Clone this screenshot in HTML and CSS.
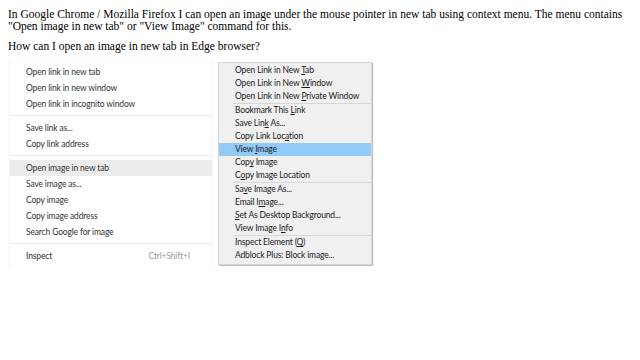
FILE: index.html
```html
<!DOCTYPE html>
<html>
<head>
<meta charset="utf-8">
<link rel="stylesheet" href="styles.css">
</head>
<body>
<p class="q">In Google Chrome / Mozilla Firefox I can open an image under the mouse pointer in new tab using context menu. The menu contains "Open image in new tab" or "View Image" command for this.</p>
<p class="q">How can I open an image in new tab in Edge browser?</p>
<div class="shot">
  <div class="chrome">
    <div class="ci">Open link in new tab</div>
    <div class="ci">Open link in new window</div>
    <div class="ci">Open link in incognito window</div>
    <div class="csep"></div>
    <div class="ci">Save link as...</div>
    <div class="ci">Copy link address</div>
    <div class="csep"></div>
    <div class="ci hl">Open image in new tab</div>
    <div class="ci">Save image as...</div>
    <div class="ci">Copy image</div>
    <div class="ci">Copy image address</div>
    <div class="ci">Search Google for image</div>
    <div class="csep"></div>
    <div class="ci"><span>Inspect</span><span class="key">Ctrl+Shift+I</span></div>
  </div>
  <div class="ff">
    <div class="fi">Open Link in New <u>T</u>ab</div>
    <div class="fi">Open Link in New <u>W</u>indow</div>
    <div class="fi">Open Link in New <u>P</u>rivate Window</div>
    <div class="fsep"></div>
    <div class="fi">Bookmark This <u>L</u>ink</div>
    <div class="fi">Save Lin<u>k</u> As...</div>
    <div class="fi">Copy Link Loc<u>a</u>tion</div>
    <div class="fi sel">View <u>I</u>mage</div>
    <div class="fi">Cop<u>y</u> Image</div>
    <div class="fi">C<u>o</u>py Image Location</div>
    <div class="fsep"></div>
    <div class="fi">Sa<u>v</u>e Image As...</div>
    <div class="fi">Email I<u>m</u>age...</div>
    <div class="fi"><u>S</u>et As Desktop Background...</div>
    <div class="fi">View Image I<u>n</u>fo</div>
    <div class="fsep"></div>
    <div class="fi">Inspect Element (<u>Q</u>)</div>
    <div class="fi">Adblock Plus: Block image...</div>
  </div>
</div>
</body>
</html>
```
FILE: styles.css
```css
body {
  margin: 8px;
  font-family: "Liberation Serif", serif;
  font-size: 11.5px;
  color: #000;
  background: #fff;
}
.q {
  margin: 0 0 8px 0;
  line-height: 12px;
}
.shot {
  display: flex;
  align-items: flex-start;
  margin-top: 8px;
  margin-left: 2px;
  font-family: Lato, "Open Sans", sans-serif;
  letter-spacing: -0.15px;
}
.chrome {
  width: 202px;
  padding: 4px 0 2px;
  background: #fff;
  box-shadow: 0 1px 2px rgba(0,0,0,0.12);
  color: #333;
  font-size: 8.5px;
}
.ci {
  height: 16px;
  line-height: 16px;
  padding: 0 22px 0 16px;
  display: flex;
  justify-content: space-between;
}
.ci.hl { background: #ececec; }
.key { color: #9a9a9a; }
.csep {
  height: 1px;
  background: #ececec;
  margin: 3px 0 4px;
}
.ff {
  box-sizing: border-box;
  width: 154px;
  margin-top: 2px;
  margin-left: 6px;
  padding: 1px 0 2px;
  background: #f0f0f0;
  border: 1px solid #d6d6d6;
  box-shadow: 1px 1px 1px rgba(0,0,0,0.25);
  color: #1a1a1a;
  font-size: 8.5px;
}
.fi {
  height: 13px;
  line-height: 13px;
  padding-left: 16px;
  white-space: nowrap;
}
.fi.sel { background: #91c9f7; }
.fi u { text-underline-offset: 1px; }
.fsep {
  height: 1px;
  background: #d7d7d7;
  margin-left: 14px;
}
```
